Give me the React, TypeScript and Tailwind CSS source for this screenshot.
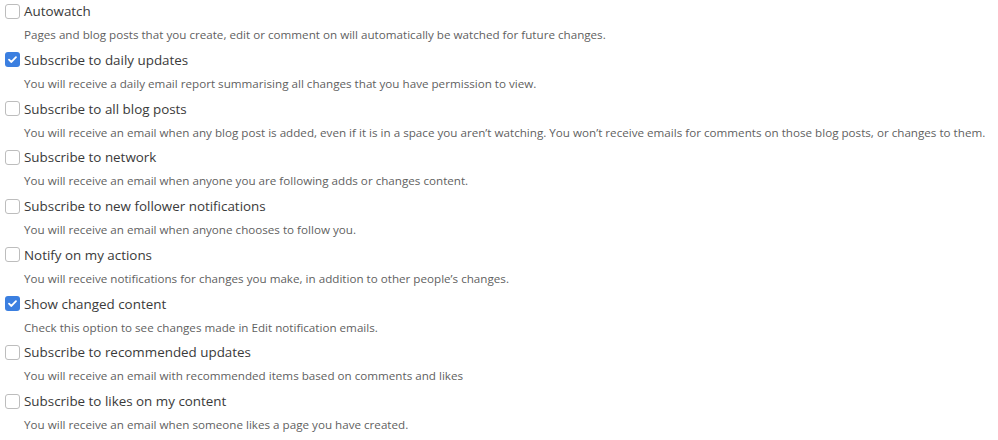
import React from 'react';

type Option = {
  label: string;
  description: string;
  checked: boolean;
};

const options: Option[] = [
  {
    label: 'Autowatch',
    description: 'Pages and blog posts that you create, edit or comment on will automatically be watched for future changes.',
    checked: false,
  },
  {
    label: 'Subscribe to daily updates',
    description: 'You will receive a daily email report summarising all changes that you have permission to view.',
    checked: true,
  },
  {
    label: 'Subscribe to all blog posts',
    description:
      'You will receive an email when any blog post is added, even if it is in a space you aren\u2019t watching. You won\u2019t receive emails for comments on those blog posts, or changes to them.',
    checked: false,
  },
  {
    label: 'Subscribe to network',
    description: 'You will receive an email when anyone you are following adds or changes content.',
    checked: false,
  },
  {
    label: 'Subscribe to new follower notifications',
    description: 'You will receive an email when anyone chooses to follow you.',
    checked: false,
  },
  {
    label: 'Notify on my actions',
    description: 'You will receive notifications for changes you make, in addition to other people\u2019s changes.',
    checked: false,
  },
  {
    label: 'Show changed content',
    description: 'Check this option to see changes made in Edit notification emails.',
    checked: true,
  },
  {
    label: 'Subscribe to recommended updates',
    description: 'You will receive an email with recommended items based on comments and likes',
    checked: false,
  },
  {
    label: 'Subscribe to likes on my content',
    description: 'You will receive an email when someone likes a page you have created.',
    checked: false,
  },
];

const Checkbox: React.FC<{ checked: boolean }> = ({ checked }) =>
  checked ? (
    <span className="flex h-[15px] w-[15px] shrink-0 items-center justify-center rounded-[3px] bg-[#3b7fe0]">
      <svg viewBox="0 0 12 12" className="h-[11px] w-[11px]" fill="none">
        <path d="M2.2 6.2 4.8 8.7 9.8 3.4" stroke="#fff" strokeWidth="2" strokeLinecap="round" strokeLinejoin="round" />
      </svg>
    </span>
  ) : (
    <span className="block h-[15px] w-[15px] shrink-0 rounded-[3px] border border-[#bdbdbd] bg-white" />
  );

export default function App() {
  return (
    <div className="h-[440px] w-[998px] overflow-hidden bg-white pl-[5px] font-['Open_Sans',sans-serif]">
      {options.map((opt) => (
        <div key={opt.label} className="h-[48.75px]">
          <label className="flex h-[22px] items-center gap-[4px]">
            <Checkbox checked={opt.checked} />
            <span className="text-[13.4px] leading-[22px] text-[#3a3a3a]">{opt.label}</span>
          </label>
          <p className="mt-[3px] whitespace-nowrap pl-[19px] text-[11.65px] leading-[20px] text-[#5f5f5f]">
            {opt.description}
          </p>
        </div>
      ))}
    </div>
  );
}
